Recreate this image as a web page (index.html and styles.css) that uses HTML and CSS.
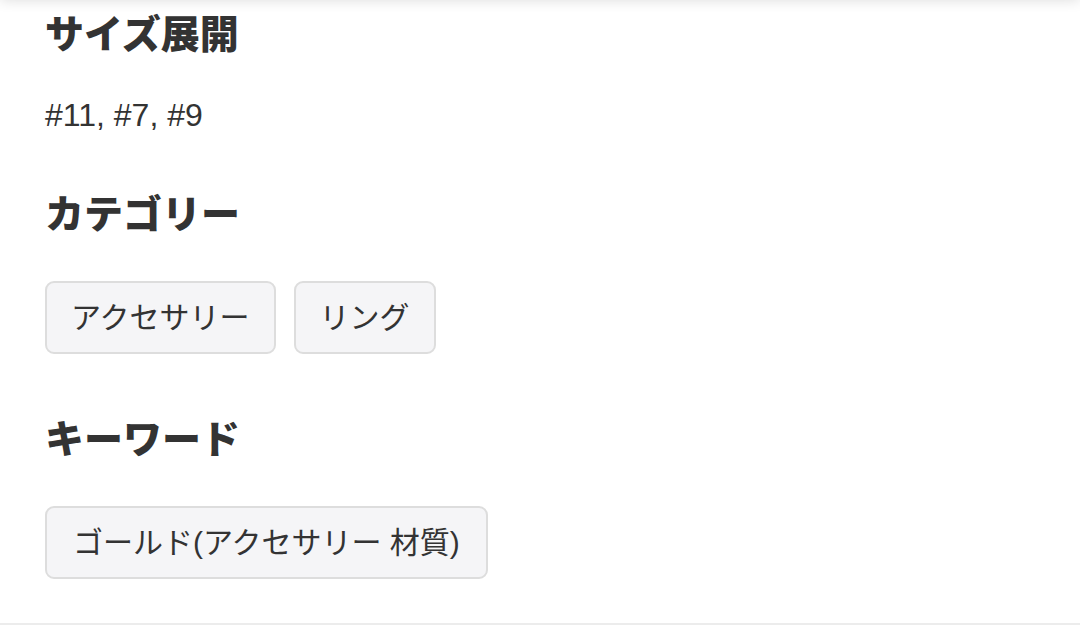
FILE: index.html
```html
<!DOCTYPE html>
<html lang="ja">
<head>
<meta charset="utf-8">
<link rel="stylesheet" href="styles.css">
</head>
<body>
<div class="top-shadow"></div>
<main class="detail">
  <section class="block">
    <h2 class="block-title">サイズ展開</h2>
    <p class="block-text">#11, #7, #9</p>
  </section>
  <section class="block">
    <h2 class="block-title">カテゴリー</h2>
    <div class="tags">
      <span class="tag">アクセサリー</span>
      <span class="tag">リング</span>
    </div>
  </section>
  <section class="block">
    <h2 class="block-title">キーワード</h2>
    <div class="tags">
      <span class="tag">ゴールド(アクセサリー 材質)</span>
    </div>
  </section>
</main>
</body>
</html>
```
FILE: styles.css
```css
html, body {
  margin: 0;
  padding: 0;
  background: #fff;
}
body {
  font-family: "Liberation Sans", "Noto Sans CJK JP", sans-serif;
  color: #333;
}
.top-shadow {
  position: fixed;
  left: 0;
  right: 0;
  top: -40px;
  height: 40px;
  background: #fff;
  box-shadow: 0 0 14px rgba(0, 0, 0, 0.14);
}
.detail {
  display: flex;
  flex-direction: column;
  gap: 62px;
  padding: 11px 45px 44px;
  border-bottom: 2px solid #ececec;
}
.block {
  display: flex;
  flex-direction: column;
}
.block-title {
  margin: 0 0 42px;
  font-size: 39px;
  line-height: 48px;
  font-weight: 900;
  color: #333;
}
.block-text {
  margin: 0;
  font-size: 32px;
  line-height: 28px;
  color: #333;
}
.tags {
  display: flex;
  flex-wrap: wrap;
  gap: 18px;
}
.tag {
  display: inline-block;
  padding: 12px 24px;
  font-size: 30px;
  line-height: 45px;
  background: #f5f5f7;
  border: 2px solid #dddddd;
  border-radius: 9px;
  color: #333;
}
.tags .tag:only-child {
  padding: 12px 26px;
}
```
